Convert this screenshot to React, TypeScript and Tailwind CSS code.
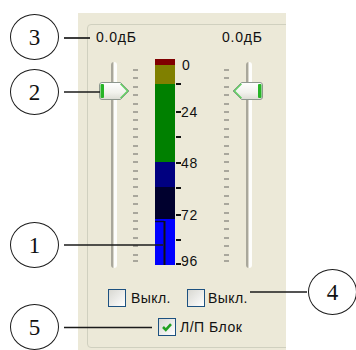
import React from "react";

const UI = "font-['Liberation_Sans',Arial,sans-serif]";

function Ticks() {
  return (
    <div className="flex flex-col mt-[7px]">
      <div className="flex flex-col gap-[6.4px]">
        {Array.from({ length: 23 }).map((_, i) => (
          <div key={i} className="w-[5px] h-[2px] bg-[#a9a79c]" />
        ))}
      </div>
      <div className="w-[5px] h-[2px] bg-[#a9a79c] mt-[4px]" />
    </div>
  );
}

function Track() {
  return (
    <div className="w-[6px] h-full rounded-[3px] bg-[linear-gradient(90deg,#a9a79b_0px,#a9a79b_2px,#d9d7cc_2px,#d9d7cc_3px,#fdfdfb_3px,#fdfdfb_6px)]" />
  );
}

function Thumb({ flip }: { flip?: boolean }) {
  return (
    <svg
      width="31"
      height="18"
      viewBox="0 0 31 18"
      className={flip ? "-scale-x-100" : ""}
    >
      <defs>
        <linearGradient id="thumbG" x1="0" y1="0" x2="0" y2="1">
          <stop offset="0" stopColor="#ffffff" />
          <stop offset="0.6" stopColor="#f1f1ec" />
          <stop offset="1" stopColor="#dcdcd4" />
        </linearGradient>
      </defs>
      <path
        d="M3 0.5 H21.5 L30 9 L21.5 17.5 H3 Q0.5 17.5 0.5 15 V3 Q0.5 0.5 3 0.5 Z"
        fill="url(#thumbG)"
        stroke="#8e978e"
      />
      <rect x="1.5" y="2" width="3.5" height="14" rx="1" fill="#27b427" />
      <path
        d="M21.5 1.8 L28.6 9 L21.5 16.2"
        stroke="#63d063"
        strokeWidth="1.5"
        fill="none"
      />
    </svg>
  );
}

function Box({ checked }: { checked?: boolean }) {
  return (
    <div className="w-[18px] h-[18px] border border-[#1c5180] bg-linear-to-br from-[#d8d8d2] to-white flex items-center justify-center shrink-0">
      {checked && (
        <svg width="12" height="12" viewBox="0 0 12 12">
          <path
            d="M2 6 L4.8 8.8 L10 3.2"
            stroke="#21a121"
            strokeWidth="2.6"
            fill="none"
          />
        </svg>
      )}
    </div>
  );
}

const marks = [25, 53, 78, 104, 129, 156, 181, 205];
const labels: { t: string; top: number; left: number }[] = [
  { t: "0", top: -1.5, left: 7 },
  { t: "24", top: 46, left: 6 },
  { t: "48", top: 97, left: 6 },
  { t: "72", top: 149, left: 6 },
  { t: "96", top: 194.5, left: 6 },
];

function Scale() {
  return (
    <div className="relative w-[25px] h-[206px]">
      {marks.map((m) => (
        <div
          key={m}
          className="absolute left-[1px] w-[5px] h-[1.6px] bg-[#111]"
          style={{ top: m - 0.8 }}
        />
      ))}
      {labels.map((l) => (
        <span
          key={l.t}
          className="absolute text-[14px] leading-[14px] h-[14px] tracking-[0.8px] text-[#111]"
          style={{ top: l.top, left: l.left }}
        >
          {l.t}
        </span>
      ))}
    </div>
  );
}

function Callout({ n, cls }: { n: string; cls: string }) {
  return (
    <div
      className={
        "absolute w-[49px] h-[46px] rounded-[50%] border-[1.5px] border-[#1b1b1b] flex items-center justify-center text-[23px] leading-none text-[#111] font-['Liberation_Serif','Times_New_Roman',serif] " +
        cls
      }
    >
      {n}
    </div>
  );
}

export default function App() {
  return (
    <div className={"relative w-[356px] h-[350px] bg-white overflow-hidden " + UI}>
      <div className="ml-[78px] pt-[0px] mt-[13px] w-[208px] h-[337px] bg-[#ece9d8] overflow-hidden pl-[9px] pt-[11px]">
        <div className="w-[230px] h-[324px] border border-[#d0d0bf] rounded-[4px] flex flex-col text-[#111]">
          <div className="flex items-start">
            {/* Left slider */}
            <div className="ml-[8px] w-[44px] flex flex-col">
              <div className="mt-[5px] h-[14px] text-[14px] leading-[14px] tracking-[0.8px] whitespace-nowrap">
                0.0дБ
              </div>
              <div className="relative mt-[18px] h-[206px] w-[44px] flex">
                <div className="ml-[15px] h-full">
                  <Track />
                </div>
                <div className="ml-[16px]">
                  <Ticks />
                </div>
                <div className="absolute left-[3px] top-[20px]">
                  <Thumb />
                </div>
              </div>
            </div>
            {/* Meter */}
            <div className="ml-[15px] mt-[34px] flex">
              <div className="w-[20px] h-[206px] flex flex-col">
                <div className="h-[6px] bg-[#800000]" />
                <div className="h-[19px] bg-[#808000]" />
                <div className="h-[78px] bg-[#008000]" />
                <div className="h-[25px] bg-[#000080]" />
                <div className="h-[32px] bg-[#00002e]" />
                <div className="h-[46px] bg-[#0000ff]" />
              </div>
              <Scale />
            </div>
            {/* Right slider */}
            <div className="ml-[22px] w-[41px] flex flex-col">
              <div className="mt-[5px] h-[14px] text-[14px] leading-[14px] tracking-[0.8px] whitespace-nowrap">
                0.0дБ
              </div>
              <div className="relative mt-[18px] h-[206px] w-[41px] flex">
                <div className="ml-[2px]">
                  <Ticks />
                </div>
                <div className="ml-[17px] h-full">
                  <Track />
                </div>
                <div className="absolute left-[10px] top-[20px]">
                  <Thumb flip />
                </div>
              </div>
            </div>
          </div>
          {/* Checkbox row */}
          <div className="mt-[21px] ml-[20px] flex items-center text-[14px] leading-[14px] tracking-[0.4px]">
            <div className="w-[79px] flex items-center">
              <Box />
              <span className="ml-[5px]">Выкл.</span>
            </div>
            <div className="flex items-center">
              <Box />
              <span className="ml-[3px]">Выкл.</span>
            </div>
          </div>
          <div className="mt-[11px] ml-[70px] flex items-center text-[14px] leading-[14px] tracking-[0.5px]">
            <Box checked />
            <span className="ml-[4px]">Л/П Блок</span>
          </div>
        </div>
      </div>

      {/* Annotation overlay */}
      <svg
        className="absolute inset-0 pointer-events-none"
        width="356"
        height="350"
        viewBox="0 0 356 350"
      >
        <g stroke="#1b1b1b" strokeWidth="1.7">
          <line x1="64" y1="38" x2="90" y2="38" />
          <line x1="64" y1="92" x2="100" y2="92" />
          <line x1="64" y1="245" x2="163" y2="245" />
          <line x1="64" y1="327.5" x2="152" y2="327.5" />
          <line x1="250" y1="292" x2="307" y2="292" />
        </g>
        <line x1="155" y1="221.5" x2="164" y2="221.5" stroke="#06063a" strokeWidth="1.4" />
        <line x1="164.5" y1="221" x2="164.5" y2="265" stroke="#111" strokeWidth="2" />
      </svg>
      <Callout n="3" cls="left-[10px] top-[14px]" />
      <Callout n="2" cls="left-[10px] top-[69px]" />
      <Callout n="1" cls="left-[10px] top-[222px]" />
      <Callout n="5" cls="left-[10px] top-[304px]" />
      <Callout n="4" cls="left-[308px] top-[269px]" />
    </div>
  );
}
